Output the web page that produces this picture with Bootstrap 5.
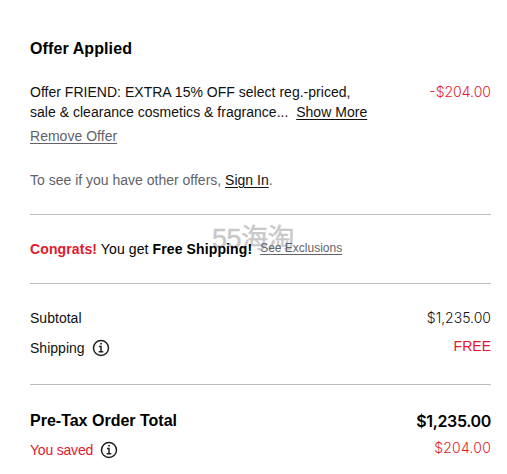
<!DOCTYPE html>
<html lang="en">
<head>
<meta charset="utf-8">
<meta name="viewport" content="width=device-width, initial-scale=1">
<title>Order Summary</title>
<link href="https://cdn.jsdelivr.net/npm/bootstrap@5.3.0/dist/css/bootstrap.min.css" rel="stylesheet">
<style>
body{font-family:"Inter","Liberation Sans",sans-serif;font-size:14px;line-height:20px;color:#111;background:#fff;overflow:hidden}
.summary{width:491px;padding:39px 0 0 30px}
.summary a{color:#111;text-underline-offset:2px;text-decoration-thickness:1px}
.summary a.quiet,.quiet{color:#626369}
.copy{font-family:"Liberation Sans",sans-serif;letter-spacing:.02px}
.title{font-family:"Liberation Sans",sans-serif;font-size:16px;line-height:20px;font-weight:700;color:#000}
.name{letter-spacing:.1px}
.price{font-weight:300}
.total{font-size:16px;font-weight:600;letter-spacing:-.35px;color:#000}
.sale,.shipping-offer b.sale{color:#e01a2b}
.rule{height:1px;background:#bdbdbd}
.offer-row{margin-top:23px}
.remove{margin-top:4px}
.signin{margin-top:24px;margin-bottom:24px;letter-spacing:0}
.shipping-offer{height:68px;letter-spacing:.11px;color:#000}
.exclusions{font-size:12px;margin-left:8px;letter-spacing:0;position:relative;top:-1px}
.costs{padding:24px 0 26px}
.totals{padding-top:26px}
.row-gap{margin-top:10px}
.saved{margin-top:9px}
.lift{margin-top:-2px}
.wide{letter-spacing:.2px}
.tight{letter-spacing:-.2px}
.watermark{left:212px;top:222px;font:27px/34px "Liberation Sans","Noto Sans CJK SC",sans-serif;color:#c8c8c8;-webkit-text-stroke:.4px #c8c8c8;z-index:-1;letter-spacing:-.5px}
.info{width:18px;height:18px;margin-left:7px}
</style>
<script src="https://cdn.jsdelivr.net/npm/bootstrap@5.3.0/dist/js/bootstrap.bundle.min.js"></script>
</head>
<body>
<main class="summary">
<h2 class="title name mb-0">Offer Applied</h2>
<div class="offer-row d-flex justify-content-between">
<div class="copy text-nowrap"><div>Offer FRIEND: EXTRA 15% OFF select reg.-priced,</div><div>sale &amp; clearance cosmetics &amp; fragrance...&nbsp; <a href="#">Show More</a></div></div>
<div class="price sale">-$204.00</div>
</div>
<div class="copy remove"><a class="quiet" href="#">Remove Offer</a></div>
<div class="copy signin quiet">To see if you have other offers, <a href="#">Sign In</a>.</div>
<div class="rule"></div>
<div class="copy shipping-offer d-flex align-items-center text-nowrap"><span><b class="sale">Congrats!</b> You get <b>Free Shipping!</b></span><a class="exclusions quiet" href="#">See Exclusions</a></div>
<div class="rule"></div>
<section class="costs">
<div class="d-flex justify-content-between"><span class="copy">Subtotal</span><span class="price">$1,235.00</span></div>
<div class="d-flex justify-content-between row-gap"><span class="copy d-flex align-items-center">Shipping<svg class="info" viewBox="0 0 18 18" fill="none" stroke="#222" stroke-width="1.5"><circle cx="9" cy="9" r="7.5"/><path d="M7 7.5h2v5M6.7 12.7h4.6M8.2 4.7h1.7"/></svg></span><span class="copy sale lift">FREE</span></div>
</section>
<div class="rule"></div>
<section class="totals">
<div class="d-flex justify-content-between"><span class="title">Pre-Tax Order Total</span><span class="total">$1,235.00</span></div>
<div class="d-flex justify-content-between saved"><span class="copy sale tight d-flex align-items-center">You saved<svg class="info" viewBox="0 0 18 18" fill="none" stroke="#222" stroke-width="1.5"><circle cx="9" cy="9" r="7.5"/><path d="M7 7.5h2v5M6.7 12.7h4.6M8.2 4.7h1.7"/></svg></span><span class="price sale lift wide">$204.00</span></div>
</section>
</main>
<div class="watermark position-absolute">55海淘</div>
</body>
</html>
